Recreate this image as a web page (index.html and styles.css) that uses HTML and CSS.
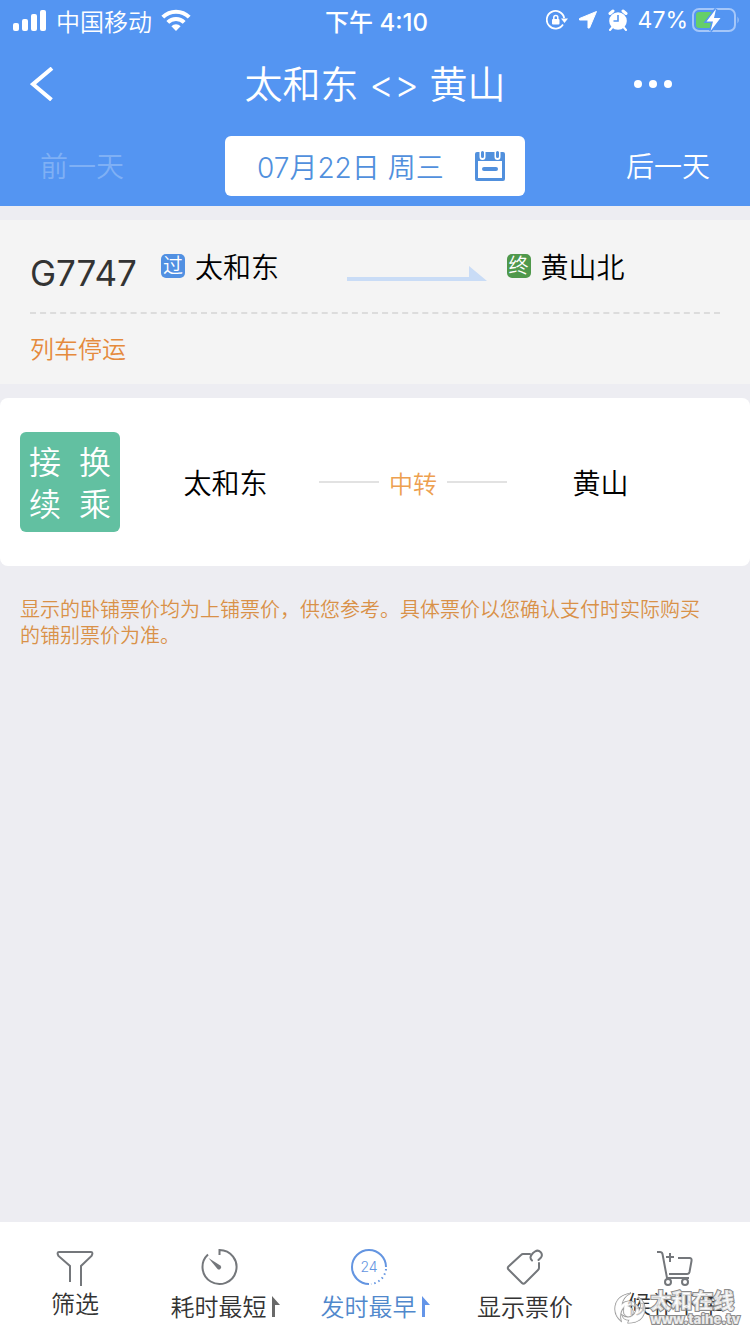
FILE: index.html
```
<!DOCTYPE html>
<html lang="zh-CN">
<head>
    <meta charset="UTF-8">
    <meta name="viewport" content="width=device-width, initial-scale=1.0">
    <title>太和东 - 黄山</title>
    <link rel="stylesheet" href="styles.css">
</head>
<body>
    <header class="header">
        <!-- 状态栏 -->
        <div class="status-bar">
            <div class="status-left">
                <svg width="34" height="22" viewBox="0 0 34 22" fill="#fff">
                    <rect x="0" y="14" width="6" height="8" rx="2"/>
                    <rect x="9" y="10" width="6" height="12" rx="2"/>
                    <rect x="18" y="5" width="6" height="17" rx="2"/>
                    <rect x="27" y="1" width="6" height="21" rx="2"/>
                </svg>
                <span class="carrier">中国移动</span>
                <svg class="wifi" width="30" height="22" viewBox="0 0 30 22" fill="none" stroke="#fff" stroke-width="4">
                    <path d="M1.8 8.2a18.5 18.5 0 0 1 26.4 0"/>
                    <path d="M6.8 13.4a11.5 11.5 0 0 1 16.4 0"/>
                    <path d="M15 22l-4.6-4.8a6.5 6.5 0 0 1 9.2 0z" fill="#fff" stroke="none"/>
                </svg>
            </div>
            <div class="status-time">下午 4:10</div>
            <div class="status-right">
                <svg width="22" height="20" viewBox="0 0 22 20" fill="none" stroke="#fff" stroke-width="1.8">
                    <path d="M18.200 8A8.800 8.800 0 1 0 17 14.500"/>
                    <path d="M15 8.400h7l-3.500 4.500z" fill="#fff" stroke="none"/>
                    <rect x="6" y="9" width="7.500" height="5.500" rx="1" fill="#fff" stroke="none"/>
                    <path d="M7.800 9.500V7.500a2 2 0 0 1 4 0v2" stroke-width="1.500"/>
                </svg>
                <svg width="20" height="20" viewBox="0 0 20 20" fill="#fff" stroke="#fff" stroke-linejoin="round">
                    <path d="M18.500 1.500L11.500 18l-1.500 0V10H1.500V8.500z"/>
                </svg>
                <svg width="20" height="22" viewBox="0 0 20 22">
                    <circle cx="10" cy="12" r="8.800" fill="#fff"/>
                    <path d="M2 4.500l3-2.500M18 4.500l-3-2.500" stroke="#fff" stroke-width="3" stroke-linecap="round"/>
                    <path d="M4.500 18l-2.500 3M15.500 18l2.500 3" stroke="#fff" stroke-width="2" stroke-linecap="round"/>
                    <path d="M10 6v6H5.500" fill="none" stroke="#5495f2" stroke-width="1.600"/>
                </svg>
                <span class="battery-text">47%</span>
                <svg class="battery" width="48" height="24" viewBox="0 0 48 24">
                    <rect x="1" y="1" width="42" height="22" rx="6" fill="none" stroke="#a5c7f9" stroke-width="2"/>
                    <path d="M45.500 8.500v7q2.500-3.500 0-7" fill="#a5c7f9"/>
                    <rect x="4" y="4" width="17" height="16" rx="3" fill="#65cf69"/>
                    <path d="M24 1L14.500 13.500h6.500L18.500 23 28.500 10h-6.500z" fill="#fff" stroke="#5495f2" stroke-width="3"/>
                    <path d="M24 1L14.500 13.500h6.500L18.500 23 28.500 10h-6.500z" fill="#fff"/>
                </svg>
            </div>
        </div>

        <!-- 标题栏 -->
        <div class="title-bar">
            <button class="icon-btn back-btn" aria-label="返回">
                <svg width="24" height="34" viewBox="0 0 24 34" fill="none" stroke="#fff" stroke-width="4">
                    <path d="M22 1.200L3 17.200l18.500 15.600"/>
                </svg>
            </button>
            <h1 class="title">太和东 &lt;&gt; 黄山</h1>
            <button class="icon-btn more-btn" aria-label="更多">
                <svg width="38" height="10" viewBox="0 0 38 10" fill="#fff">
                    <circle cx="4" cy="5" r="4"/>
                    <circle cx="19" cy="5" r="4"/>
                    <circle cx="34" cy="5" r="4"/>
                </svg>
            </button>
        </div>

        <!-- 日期切换 -->
        <div class="date-bar">
            <button class="day-btn" disabled>前一天</button>
            <button class="date-btn">
                <span>07月22日 周三</span>
                <svg width="30" height="30" viewBox="0 0 30 30">
                    <path d="M2 1h26a2 2 0 0 1 2 2v25a2 2 0 0 1-2 2H2a2 2 0 0 1-2-2V3a2 2 0 0 1 2-2zM3 10v17h24V10z" fill="#5190dd" fill-rule="evenodd"/>
                    <path d="M7.500 0v6M22.500 0v6" stroke="#fff" stroke-width="6" stroke-linecap="round"/>
                    <path d="M7.500 1.500v4M22.500 1.500v4" stroke="#5190dd" stroke-width="3" stroke-linecap="round"/>
                    <path d="M9 18h12" stroke="#5190dd" stroke-width="4" stroke-linecap="round"/>
                </svg>
            </button>
            <button class="day-btn">后一天</button>
        </div>
    </header>

    <main>
        <section class="train-card">
            <div class="train-row">
                <strong class="train-no">G7747</strong>
                <div class="station">
                    <span class="tag tag-pass">过</span>
                    <span>太和东</span>
                </div>
                <svg class="train-arrow" width="140" height="16" viewBox="0 0 140 16" fill="#c9dcf6">
                    <path d="M0 11h122V0l18 15H0z"/>
                </svg>
                <div class="station station-end">
                    <span class="tag tag-end">终</span>
                    <span>黄山北</span>
                </div>
            </div>
            <p class="train-status">列车停运</p>
        </section>

        <section class="transfer-card">
            <div class="transfer-badge">
                <span>接</span><span>换</span>
                <span>续</span><span>乘</span>
            </div>
            <span class="transfer-station">太和东</span>
            <span class="transfer-line">中转</span>
            <span class="transfer-station">黄山</span>
        </section>

        <p class="notice">显示的卧铺票价均为上铺票价，供您参考。具体票价以您确认支付时实际购买的铺别票价为准。</p>
    </main>

    <footer class="tab-bar">
        <button class="tab tab-tight">
            <span class="tab-body">
                <svg width="38" height="38" viewBox="0 0 38 38" fill="none" stroke="#74777b" stroke-width="2">
                    <path d="M14 34V18L2.500 8Q.5 4 3 4h32q2.500 0 .5 4L25 18v20"/>
                </svg>
                <span>筛选</span>
            </span>
        </button>
        <button class="tab">
            <span class="tab-body">
                <svg width="38" height="38" viewBox="0 0 38 38" fill="none" stroke="#74777b" stroke-width="2">
                    <path d="M19.500 7V2A17 17 0 1 1 8 6.500"/>
                    <path d="M8.500 10l11.800 7.500a2.200 2.200 0 1 1-3 3.200z" fill="#74777b" stroke="none"/>
                </svg>
                <span>耗时最短</span>
            </span>
            <svg class="sort-arrow" width="8" height="22" viewBox="0 0 8 22"><path d="M0 0l8 9H3v12H0z" fill="#696969"/></svg>
        </button>
        <button class="tab tab-active">
            <span class="tab-body">
                <svg width="38" height="38" viewBox="0 0 38 38" fill="none" stroke="#6495e1" stroke-width="2">
                    <path d="M19 36A17 17 0 1 1 36 19"/>
                    <path d="M36 21A17 17 0 0 1 21 36" stroke-dasharray="1.500 3"/>
                    <text x="19" y="24" class="icon-text">24</text>
                </svg>
                <span>发时最早</span>
            </span>
            <svg class="sort-arrow" width="8" height="22" viewBox="0 0 8 22"><path d="M0 0l8 9H3v12H0z" fill="#6495e8"/></svg>
        </button>
        <button class="tab">
            <span class="tab-body">
                <svg width="38" height="38" viewBox="0 0 38 38" fill="none" stroke="#74777b" stroke-width="2" stroke-linecap="round" stroke-linejoin="round">
                    <path d="M24 6h-7q-1 0-2 1L2.500 18.500q-1.500 1.500 0 3L16 35q1.500 1.500 3 0l13-13q1-1 1-2v-5"/>
                    <path d="M26 12.500q-3.500-3 1-7.500l2-1.500q3-2 5.500.5t.5 5.500l-2.500 2.500"/>
                </svg>
                <span>显示票价</span>
            </span>
        </button>
        <button class="tab tab-tight">
            <span class="tab-body">
                <svg width="38" height="38" viewBox="0 0 38 38" fill="none" stroke="#74777b" stroke-width="2">
                    <path d="M1 4h3q2 0 2.500 2l4.500 24h22M13 26h18q2 0 2.500-2l2-11q.5-3-2-3H22M10 9h8M14 5v9"/>
                    <circle cx="12" cy="34" r="3"/>
                    <circle cx="29" cy="34" r="3"/>
                </svg>
                <span>候补下单</span>
            </span>
        </button>

        <!-- 水印 -->
        <div class="watermark">
            <svg width="32" height="32" viewBox="0 0 32 32" fill="#fff" fill-opacity=".7" stroke="#8b8b8b" stroke-width="1.200">
                <path d="M17 1Q1 4 1 17q0 7 6 12-2-9 3-14-2 8 4 10 5 0 5-5 0-4-5-6 5-2 9 2-1-7-8-7-4 0-7 3Q9 5 17 1z"/>
                <path d="M14 31q15 0 17-13 0-9-7-13 5 8 1 14 0-5-4-7 3 8-3 12-5 3-10-1 1 5 7 5-1 2-1 3z"/>
            </svg>
            <div class="watermark-text">
                <span class="watermark-name">太和在线</span>
                <span class="watermark-url">www.taihe.tv</span>
            </div>
        </div>
    </footer>
</body>
</html>
```
FILE: styles.css
```
* {
    box-sizing: border-box;
    margin: 0;
    padding: 0;
}

body {
    display: flex;
    flex-direction: column;
    min-height: 100vh;
    background: #ededf2;
    color: #000;
    font-family: Inter, "Noto Sans CJK SC", sans-serif;
    font-size: 28px;
    font-weight: 350;
}

button {
    border: none;
    background: none;
    color: inherit;
    font: inherit;
    cursor: pointer;
}

svg {
    display: block;
    flex-shrink: 0;
}

/* 顶部 */
.header {
    background: #5495f2;
    color: #fff;
    padding-bottom: 10px;
}

.status-bar {
    display: grid;
    grid-template-columns: 1fr auto 1fr;
    align-items: center;
    height: 40px;
    padding: 0 10px 0 13px;
    font-size: 24px;
}

.status-left,
.status-right {
    display: flex;
    align-items: center;
}

.status-left {
    gap: 9px;
}

.status-right {
    justify-content: flex-end;
    gap: 10px;
}

.status-time {
    font-weight: 500;
}

.battery-text {
    font-size: 23px;
    font-weight: 400;
}

.battery {
    margin-left: -6px;
}

.title-bar {
    display: grid;
    grid-template-columns: 1fr auto 1fr;
    align-items: center;
    height: 88px;
    padding: 0 30px;
}

.title {
    padding-bottom: 6px;
    font-size: 38px;
    font-weight: 350;
}

.icon-btn {
    display: flex;
}

.more-btn {
    justify-self: end;
    margin-right: 48px;
}

.date-bar {
    display: grid;
    grid-template-columns: 1fr 2fr 1fr;
    align-items: center;
    padding: 8px 0 0;
}

.date-bar .day-btn {
    justify-self: start;
    padding: 0 40px 2px;
}

.date-bar .day-btn:last-child {
    justify-self: end;
}

.day-btn:disabled {
    color: #7fb0f5;
}

.date-btn {
    display: flex;
    align-items: center;
    justify-content: space-between;
    justify-self: center;
    width: 80%;
    height: 60px;
    padding: 0 20px 0 32px;
    border-radius: 6px;
    background: #fff;
    color: #5190dd;
}

/* 车次 */
.train-card {
    margin-top: 14px;
    padding: 0 30px;
    background: #f4f4f4;
}

.train-row {
    display: grid;
    grid-template-columns: 131px 186fr 140px 234fr;
    align-items: center;
    height: 94px;
    border-bottom: 2px dashed #dcdcdc;
}

.train-no {
    padding-top: 14px;
    color: #333;
    font-size: 35px;
    font-weight: 400;
}

.station {
    display: flex;
    align-items: center;
    gap: 10px;
}

.station-end {
    padding-left: 20px;
}

.tag {
    width: 24px;
    height: 24px;
    border-radius: 5px;
    color: #fff;
    font-size: 20px;
    line-height: 24px;
    text-align: center;
}

.tag-pass {
    background: #5190e2;
}

.tag-end {
    background: #4f984b;
}

.train-arrow {
    width: 100%;
    margin-top: 16px;
}

.train-status {
    height: 70px;
    color: #e58a3c;
    font-size: 24px;
    line-height: 72px;
}

/* 接续换乘 */
.transfer-card {
    display: grid;
    grid-template-columns: 112px 1fr 188px 1fr;
    align-items: center;
    margin-top: 14px;
    padding: 34px 56px 34px 20px;
    border-radius: 8px;
    background: #fff;
}

.transfer-badge {
    display: grid;
    grid-template-columns: 1fr 1fr;
    width: 100px;
    height: 100px;
    padding: 10px 0;
    border-radius: 6px;
    background: #62c0a1;
    color: #fff;
    font-size: 32px;
    line-height: 42px;
    text-align: center;
}

.transfer-station {
    text-align: center;
}

.transfer-line {
    display: flex;
    align-items: center;
    gap: 10px;
    color: #eda04f;
    font-size: 24px;
}

.transfer-line::before,
.transfer-line::after {
    content: "";
    flex: 1;
    height: 2px;
    background: #e2e2e2;
}

.notice {
    padding: 31px 40px 31px 20px;
    color: #d99148;
    font-size: 20px;
    line-height: 26px;
}

/* 底部菜单 */
.tab-bar {
    position: relative;
    display: grid;
    grid-template-columns: repeat(5, 1fr);
    height: 112px;
    margin-top: auto;
    background: #fff;
    color: #333;
    font-size: 24px;
}

.tab {
    display: flex;
    align-items: flex-start;
    justify-content: center;
    gap: 5px;
    padding-top: 26px;
    white-space: nowrap;
}

.tab-body {
    display: flex;
    flex-direction: column;
    align-items: center;
    gap: 5px;
    line-height: 34px;
}

.tab-tight .tab-body {
    gap: 2px;
}

.tab-active {
    color: #5088cc;
}

.sort-arrow {
    margin-top: 48px;
}

.icon-text {
    fill: #6495e1;
    stroke: none;
    font-size: 14px;
    text-anchor: middle;
}

.watermark {
    position: absolute;
    right: 10px;
    bottom: 8px;
    display: flex;
    align-items: center;
    gap: 4px;
    color: rgba(255, 255, 255, 0.8);
    font-weight: 900;
    -webkit-text-stroke: 2px #8b8b8b;
    paint-order: stroke fill;
    pointer-events: none;
}

.watermark-text {
    display: flex;
    flex-direction: column;
}

.watermark-name {
    font-size: 21px;
    line-height: 22px;
}

.watermark-url {
    font-size: 13px;
    line-height: 14px;
}
```
